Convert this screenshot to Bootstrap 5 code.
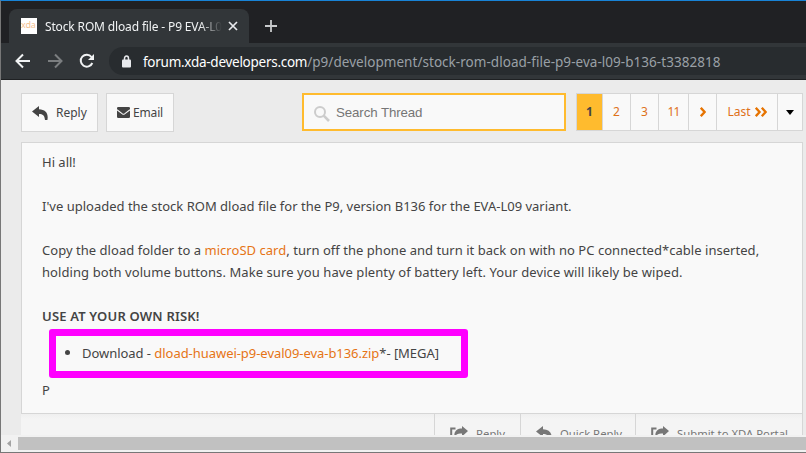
<!DOCTYPE html>
<html lang="en">
<head>
<meta charset="utf-8">
<meta name="viewport" content="width=device-width, initial-scale=1">
<title>Stock ROM dload file - P9 EVA-L09</title>
<link href="https://cdn.jsdelivr.net/npm/bootstrap@5.3.0/dist/css/bootstrap.min.css" rel="stylesheet">
<style>
body{width:806px;height:453px;overflow:hidden;background:#ebebeb;font-family:"Noto Sans",sans-serif;font-size:13px;line-height:22px;color:#444}
svg{display:block;flex:none}
.window{height:453px;border-left:1px solid #777;border-top:1px solid #1883d7;border-bottom:1px solid #777}
.tabstrip{height:42px;background:#202124;padding-left:8px}
.tab{width:240px;height:34px;background:#323639;border-radius:8px 8px 0 0;padding:0 11px 0 12px;color:#f1f3f4}
.favicon{width:16px;height:16px;background:#fff;color:#f5bf8f;font-size:9px;line-height:14px;letter-spacing:-.2px;overflow:hidden}
.tab-title{width:177px;margin-left:8px;padding-top:2px;font-size:12px;letter-spacing:-.15px;-webkit-mask-image:linear-gradient(90deg,#000 155px,transparent 177px);mask-image:linear-gradient(90deg,#000 155px,transparent 177px)}
.toolbar{height:37px;background:#323639;border-bottom:1px solid #1f2123;padding-left:14px}
.omnibox{height:28px;margin-left:14px;background:#282c2f;border-radius:14px 0 0 14px;padding-left:13px;color:#9aa0a6;font-size:13.5px;letter-spacing:.04px}
.omnibox b{font-weight:400;color:#fff;letter-spacing:-.27px}
.url{margin-left:11px;padding-top:1px}
.page{height:355px;padding:13px 3px 0 20px;overflow:hidden}
.box{background:#f9f9f9;border:1px solid #d6d6d6}
.action{height:39px;color:#444;text-decoration:none;font-size:12px}
.reply-btn{width:77px;padding-left:10px}
.reply-btn span{margin-left:8px}
.mail-btn{width:68px;margin-left:8px;padding-left:10px}
.mail-btn span{margin-left:3px;letter-spacing:-.15px}
.search{width:264px;height:38px;margin-left:128px;background:#f9f9f9;border:2px solid #ffbb2e;padding-left:10px;color:#757575;font:13.3px "Liberation Sans",sans-serif}
.search svg{margin-top:3px}
.search span{margin-left:6px;letter-spacing:-.1px}
.pages{width:227px;height:38px;margin-left:10px;color:#de7119}
.pg{width:28px;height:36px;border-right:1px solid #d6d6d6;display:flex;align-items:center;justify-content:center;font-size:12px}
.pg.current{width:26px;background:#ffbb2e;color:#444;font-weight:700}
.pg-wide{width:30px}
.pg-wide span{letter-spacing:-.8px}
.pg-last{width:61px;gap:4px}
.pg:last-child{width:24px;border-right:0}
.post{height:272px;margin-top:10px;padding:8px 20px 0}
.post p{margin:0 0 22px;white-space:nowrap}
.t3{letter-spacing:.035px}
.t4{letter-spacing:.08px}
.t5{letter-spacing:.18px;font-weight:600}
.t6{letter-spacing:-.045px}
.orange{color:#e67415;text-decoration:none}
.marked{width:419px;height:49px;margin:-20px 0 0 7px;border:7px solid #f0f;border-radius:3px;padding:0 0 2px 9px}
.dot{width:5px;height:5px;border-radius:50%;background:#444;margin-right:12px}
.tail{padding-top:1px}
.post-foot{height:40px;background:linear-gradient(#efefef,#f4f4f4 5px);border-right:1px solid #d6d6d6;color:#777;font-size:11.3px}
.post-foot>div{border-left:1px solid #d6d6d6;height:40px;padding-left:15px}
.post-foot span{margin:9px 0 0 8px}
.post-foot svg{margin-top:12px}
.foot-a{width:86px}
.foot-b{width:115px}
.foot-c{width:167px}
.scroll{height:17px;background:#f1f1f1}
.arrow{margin:0 7px 0 6px}
.thumb{height:13px;background:#c1c1c1}
</style>
</head>
<body>
<svg width="0" height="0" class="position-absolute">
<symbol id="reply" viewBox="0 0 16 14"><path d="M7 0 0 5.500 7 11V8c3.800 0 5.500 1.300 6 6h2.400C16.700 7.500 13.500 3.500 7 3.300z"/></symbol>
<symbol id="share" viewBox="0 0 18 14"><path d="M5.500 2.500H1.200V13H13v-3" fill="none" stroke="currentColor" stroke-width="2"/><path d="M12 0v2.500C7 2.500 4 4.800 4.300 11c1.400-2.500 3.700-3.500 7.700-3.500v3L18 5z"/></symbol>
</svg>
<div class="window d-flex flex-column">
  <div class="tabstrip d-flex align-items-end">
    <div class="tab d-flex align-items-center">
      <div class="favicon">xda</div>
      <div class="tab-title text-nowrap overflow-hidden">Stock ROM dload file - P9 EVA-L09</div>
      <svg width="10" height="10" viewBox="0 0 10 10" class="ms-auto" stroke="#e8eaed" stroke-width="1.700"><path d="m1 1 8 8M9 1 1 9"/></svg>
    </div>
    <svg class="mb-2 ms-3 mt-auto" width="12" height="18" viewBox="0 0 12 18" stroke="#c8cacc" stroke-width="1.800"><path d="M0 9h12M6 3v12"/></svg>
  </div>
  <div class="toolbar d-flex align-items-center">
    <svg width="16" height="16" viewBox="0 0 16 16" fill="none" stroke="#f1f3f4" stroke-width="2"><path d="M15 8H2M8 1.500 1.500 8 8 14.500"/></svg>
    <svg class="ms-3" width="16" height="16" viewBox="0 0 16 16" fill="none" stroke="#7b7e80" stroke-width="2"><path d="M1 8h13M8 1.500 14.500 8 8 14.500"/></svg>
    <svg class="ms-3" width="16" height="16" viewBox="0 0 16 16" fill="none" stroke="#f1f3f4" stroke-width="2"><path d="M13.300 10A6 6 0 1 1 12.500 4"/><path d="M15 1v6H9z" fill="#f1f3f4" stroke="none"/></svg>
    <div class="omnibox d-flex align-items-center flex-grow-1">
      <svg width="10" height="13" viewBox="0 0 10 13"><path d="M2.500 6V3.500a2 2.500 0 0 1 4 0V6" fill="none" stroke="#e8eaed" stroke-width="1.500"/><rect y="4.500" width="9" height="8" rx="1" fill="#e8eaed"/></svg>
      <div class="url text-nowrap"><b>forum.xda-developers.com</b>/p9/development/stock-rom-dload-file-p9-eva-l09-b136-t3382818</div>
    </div>
  </div>
  <div class="page">
    <div class="d-flex">
      <a class="box action reply-btn d-flex align-items-center"><svg width="16" height="14" fill="#444"><use href="#reply"/></svg><span>Reply</span></a>
      <a class="box action mail-btn d-flex align-items-center"><svg width="13" height="11" viewBox="0 0 13 11"><rect width="13" height="11" rx="1.300" fill="#444"/><path d="m0 2.700 5.400 4.200q1.100.8 2.200 0L13 2.700" fill="none" stroke="#f9f9f9" stroke-width="1.100"/></svg><span>Email</span></a>
      <div class="search d-flex align-items-center"><svg width="16" height="16" viewBox="0 0 16 16" fill="none" stroke="#ccc" stroke-width="2"><circle cx="6" cy="6" r="5"/><path d="m9.700 9.700 5.300 5.300" stroke-width="2.600"/></svg><span>Search Thread</span></div>
      <div class="box pages d-flex align-items-center">
        <div class="pg current">1</div><div class="pg">2</div><div class="pg">3</div><div class="pg pg-wide"><span>11</span></div>
        <div class="pg"><svg width="6" height="10" viewBox="0 0 6 10" fill="none" stroke="#e67300" stroke-width="2.300"><path d="m.8.8L4.600 5 .8 9.200"/></svg></div>
        <div class="pg pg-last"><span>Last</span><svg width="12" height="10" viewBox="0 0 12 10" fill="none" stroke="#e67300" stroke-width="2.300"><path d="m.8.8L4.600 5 .8 9.200M6.800.8 10.600 5 6.800 9.200"/></svg></div>
        <div class="pg"><svg width="8" height="5" viewBox="0 0 8 5"><path d="M0 0h8L4 5z"/></svg></div>
      </div>
    </div>
    <div class="box post">
      <p>Hi all!</p>
      <p>I've uploaded the stock ROM dload file for the P9, version B136 for the EVA-L09 variant.</p>
      <p><span class="t3">Copy the dload folder to a <a class="orange">microSD card</a>, turn off the phone and turn it back on with no PC connected*cable inserted,</span><br><span class="t4">holding both volume buttons. Make sure you have plenty of battery left. Your device will likely be wiped.</span></p>
      <p><b class="t5">USE AT YOUR OWN RISK!</b></p>
      <div class="marked d-flex align-items-center text-nowrap"><span class="dot"></span><span class="t6">Download - <a class="orange">dload-huawei-p9-eval09-eva-b136.zip</a>*- [MEGA]</span></div>
      <p class="tail">P</p>
    </div>
    <div class="post-foot d-flex justify-content-end">
      <div class="foot-a d-flex"><svg width="18" height="14" fill="#777" color="#777"><use href="#share"/></svg><span>Reply</span></div>
      <div class="foot-b d-flex"><svg width="16" height="14" fill="#777"><use href="#reply"/></svg><span>Quick Reply</span></div>
      <div class="foot-c d-flex"><svg width="18" height="14" fill="#777" color="#777"><use href="#share"/></svg><span>Submit to XDA Portal</span></div>
    </div>
  </div>
  <div class="scroll d-flex align-items-center"><svg class="arrow" width="4" height="7" viewBox="0 0 4 7" fill="#a3a3a3"><path d="M4 0v7L0 3.500z"/></svg><div class="thumb flex-grow-1"></div></div>
</div>
<script src="https://cdn.jsdelivr.net/npm/bootstrap@5.3.0/dist/js/bootstrap.bundle.min.js"></script>
</body>
</html>
